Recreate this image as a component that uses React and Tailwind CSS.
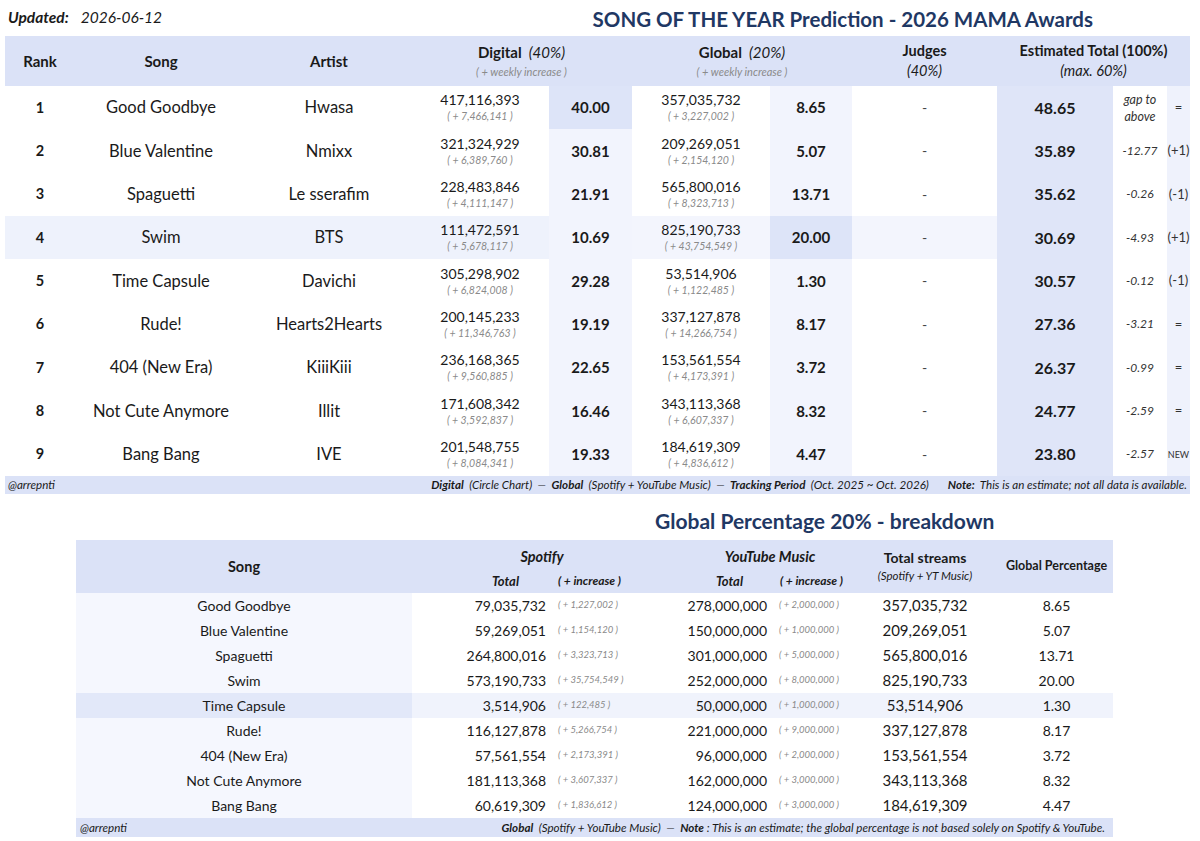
import React from "react";

const F = { fontFamily: "Lato, 'Open Sans', sans-serif" };

const top = [
  ["1", "Good Goodbye", "Hwasa", "417,116,393", "7,466,141", "40.00", "357,035,732", "3,227,002", "8.65", "48.65", "gap", "="],
  ["2", "Blue Valentine", "Nmixx", "321,324,929", "6,389,760", "30.81", "209,269,051", "2,154,120", "5.07", "35.89", "-12.77", "(+1)"],
  ["3", "Spaguetti", "Le sserafim", "228,483,846", "4,111,147", "21.91", "565,800,016", "8,323,713", "13.71", "35.62", "-0.26", "(-1)"],
  ["4", "Swim", "BTS", "111,472,591", "5,678,117", "10.69", "825,190,733", "43,754,549", "20.00", "30.69", "-4.93", "(+1)"],
  ["5", "Time Capsule", "Davichi", "305,298,902", "6,824,008", "29.28", "53,514,906", "1,122,485", "1.30", "30.57", "-0.12", "(-1)"],
  ["6", "Rude!", "Hearts2Hearts", "200,145,233", "11,346,763", "19.19", "337,127,878", "14,266,754", "8.17", "27.36", "-3.21", "="],
  ["7", "404 (New Era)", "KiiiKiii", "236,168,365", "9,560,885", "22.65", "153,561,554", "4,173,391", "3.72", "26.37", "-0.99", "="],
  ["8", "Not Cute Anymore", "Illit", "171,608,342", "3,592,837", "16.46", "343,113,368", "6,607,337", "8.32", "24.77", "-2.59", "="],
  ["9", "Bang Bang", "IVE", "201,548,755", "8,084,341", "19.33", "184,619,309", "4,836,612", "4.47", "23.80", "-2.57", "NEW"],
];

const bottom = [
  ["Good Goodbye", "79,035,732", "1,227,002", "278,000,000", "2,000,000", "357,035,732", "8.65"],
  ["Blue Valentine", "59,269,051", "1,154,120", "150,000,000", "1,000,000", "209,269,051", "5.07"],
  ["Spaguetti", "264,800,016", "3,323,713", "301,000,000", "5,000,000", "565,800,016", "13.71"],
  ["Swim", "573,190,733", "35,754,549", "252,000,000", "8,000,000", "825,190,733", "20.00"],
  ["Time Capsule", "3,514,906", "122,485", "50,000,000", "1,000,000", "53,514,906", "1.30"],
  ["Rude!", "116,127,878", "5,266,754", "221,000,000", "9,000,000", "337,127,878", "8.17"],
  ["404 (New Era)", "57,561,554", "2,173,391", "96,000,000", "2,000,000", "153,561,554", "3.72"],
  ["Not Cute Anymore", "181,113,368", "3,607,337", "162,000,000", "3,000,000", "343,113,368", "8.32"],
  ["Bang Bang", "60,619,309", "1,836,612", "124,000,000", "3,000,000", "184,619,309", "4.47"],
];

const TOP_COLS = "grid w-[1185px] grid-cols-[70px_172px_164px_138px_83px_138px_82px_145px_116px_54px_23px]";
const BOT_COLS = "grid w-[1037px] grid-cols-[336px_140px_88px_132px_78px_150px_113px]";

function Num({ n, inc }) {
  return (
    <div className="flex flex-col items-center justify-center leading-none">
      <span className="text-[14px] text-[#1a1a1a]">{n}</span>
      <span className="text-[10.5px] italic text-[#8a8a8a] mt-[4px]">( + {inc} )</span>
    </div>
  );
}

function TopRow({ r, i }) {
  const hl = i === 3;
  const base = hl ? "bg-[#eef2fc]" : "bg-white";
  const digScore = i === 0 ? "bg-[#dde4f8]" : "bg-[#f2f4fd]";
  const globNum = hl ? "bg-[#f3f5fd]" : "bg-white";
  const globScore = hl ? "bg-[#dde4f8]" : "bg-[#f2f4fd]";
  const judges = hl ? "bg-[#f3f5fd]" : "bg-white";
  return (
    <div className={`${TOP_COLS} h-[43.33px] text-[#1a1a1a]`}>
      <div className={`${base} flex items-center justify-center text-[14.5px] font-bold`}>{r[0]}</div>
      <div className={`${base} flex items-center justify-center text-[16.5px]`}>{r[1]}</div>
      <div className={`${base} flex items-center justify-center text-[16.5px]`}>{r[2]}</div>
      <div className={`${base} flex items-center justify-center`}><Num n={r[3]} inc={r[4]} /></div>
      <div className={`${digScore} flex items-center justify-center text-[15px] font-bold`}>{r[5]}</div>
      <div className={`${globNum} flex items-center justify-center`}><Num n={r[6]} inc={r[7]} /></div>
      <div className={`${globScore} flex items-center justify-center text-[15px] font-bold`}>{r[8]}</div>
      <div className={`${judges} flex items-center justify-center text-[14px] text-[#444]`}>-</div>
      <div className="bg-[#dfe5f8] flex items-center justify-center text-[16px] font-bold">{r[9]}</div>
      <div className="bg-white flex items-center justify-center italic text-[#333]">
        {r[10] === "gap" ? (
          <div className="flex flex-col items-center text-[12.5px] leading-[17px]">
            <span>gap to</span>
            <span>above</span>
          </div>
        ) : (
          <span className="text-[12px]">{r[10]}</span>
        )}
      </div>
      <div className="bg-[#eff2fc] flex items-center justify-center text-[#333]">
        {r[11] === "NEW" ? <span className="text-[9px]">NEW</span> : <span className="text-[13px]">{r[11]}</span>}
      </div>
    </div>
  );
}

function BotRow({ r, i }) {
  const hl = i === 4;
  const song = hl ? "bg-[#e2e8f9]" : "bg-[#f5f7fe]";
  const rest = hl ? "bg-[#f0f3fc]" : "bg-white";
  const inc = "text-[9.5px] italic text-[#8a8a8a]";
  return (
    <div className={`${BOT_COLS} h-[25px] text-[#1a1a1a]`}>
      <div className={`${song} flex items-center justify-center text-[14px]`}>{r[0]}</div>
      <div className={`${rest} flex items-center justify-end pr-[6px] text-[14px]`}>{r[1]}</div>
      <div className={`${rest} flex items-center pl-[6px] ${inc}`}>( + {r[2]} )</div>
      <div className={`${rest} flex items-center justify-end pr-[5px] text-[14px]`}>{r[3]}</div>
      <div className={`${rest} flex items-center pl-[7px] ${inc}`}>( + {r[4]} )</div>
      <div className={`${rest} flex items-center justify-center text-[15px]`}>{r[5]}</div>
      <div className={`${rest} flex items-center justify-center text-[14px]`}>{r[6]}</div>
    </div>
  );
}

export default function App() {
  return (
    <div className="w-[1200px] h-[841px] bg-white overflow-hidden" style={F}>
      {/* top heading line */}
      <div className="h-[36px] flex items-center justify-between pl-[8px] pr-[107px]">
        <div className="text-[15.5px] text-[#1a1a1a]">
          <span className="font-bold italic">Updated:</span>
          <span className="italic ml-[12px]">2026-06-12</span>
        </div>
        <div className="text-[20.5px] font-bold text-[#1f3864] pt-[2px]">SONG OF THE YEAR Prediction - 2026 MAMA Awards</div>
      </div>

      {/* top table */}
      <div className="pl-[5px]">
        <div className={`${TOP_COLS} h-[50px] bg-[#dbe2f7] text-[#1a1a1a]`}>
          <div className="flex items-center justify-center text-[15px] font-bold">Rank</div>
          <div className="flex items-center justify-center text-[15px] font-bold">Song</div>
          <div className="flex items-center justify-center text-[15px] font-bold">Artist</div>
          <div className="col-span-2 flex flex-col items-center justify-center leading-none">
            <div className="text-[15px]"><span className="font-bold">Digital</span><span className="italic ml-[7px]">(40%)</span></div>
            <div className="text-[11px] italic text-[#8a8a8a] mt-[6px]">( + weekly increase )</div>
          </div>
          <div className="col-span-2 flex flex-col items-center justify-center leading-none">
            <div className="text-[15px]"><span className="font-bold">Global</span><span className="italic ml-[7px]">(20%)</span></div>
            <div className="text-[11px] italic text-[#8a8a8a] mt-[6px]">( + weekly increase )</div>
          </div>
          <div className="flex flex-col items-center justify-center leading-none text-[14.5px]">
            <div className="font-bold">Judges</div>
            <div className="italic mt-[6px]">(40%)</div>
          </div>
          <div className="col-span-3 flex flex-col items-center justify-center leading-none text-[14.5px]">
            <div className="font-bold">Estimated Total (100%)</div>
            <div className="italic mt-[6px]">(max. 60%)</div>
          </div>
        </div>
        {top.map((r, i) => (
          <TopRow key={i} r={r} i={i} />
        ))}
        <div className="w-[1185px] h-[18px] bg-[#dbe2f7] flex items-center justify-between px-[3px] text-[11.6px] italic text-[#1a1a1a]">
          <span>@arrepnti</span>
          <span className="whitespace-pre">
            <span className="font-bold">Digital</span>  (Circle Chart)  —  <span className="font-bold">Global</span>  (Spotify + YouTube Music)  —  <span className="font-bold">Tracking Period</span>  (Oct. 2025 ~ Oct. 2026)       <span className="font-bold">Note:</span>  This is an estimate; not all data is available.
          </span>
        </div>
      </div>

      {/* bottom title */}
      <div className="h-[46px] flex items-end pb-[3px] pl-[655px]">
        <div className="text-[21px] font-bold text-[#1f3864]">Global Percentage 20% - breakdown</div>
      </div>

      {/* bottom table */}
      <div className="pl-[76px]">
        <div className={`${BOT_COLS} h-[53px] bg-[#dbe2f7] text-[#1a1a1a]`}>
          <div className="flex items-center justify-center text-[14.5px] font-bold">Song</div>
          <div className="col-span-2 grid grid-cols-[140px_88px] grid-rows-[30px_23px]">
            <div className="col-span-2 flex items-end justify-center pl-[32px] pb-[2px] text-[14.5px] font-bold italic">Spotify</div>
            <div className="flex items-center justify-end pr-[33px] text-[13px] font-bold italic">Total</div>
            <div className="flex items-center pl-[6px] text-[12px] font-bold italic">( + increase )</div>
          </div>
          <div className="col-span-2 grid grid-cols-[132px_78px] grid-rows-[30px_23px]">
            <div className="col-span-2 flex items-end justify-center pl-[50px] pb-[2px] text-[14.5px] font-bold italic">YouTube Music</div>
            <div className="flex items-center justify-end pr-[29px] text-[13px] font-bold italic">Total</div>
            <div className="flex items-center pl-[8px] text-[12px] font-bold italic">( + increase )</div>
          </div>
          <div className="flex flex-col items-center justify-center leading-none">
            <div className="text-[14px] font-bold">Total streams</div>
            <div className="text-[11.5px] italic mt-[5px]">(Spotify + YT Music)</div>
          </div>
          <div className="flex items-center justify-center text-[12.5px] font-bold">Global Percentage</div>
        </div>
        {bottom.map((r, i) => (
          <BotRow key={i} r={r} i={i} />
        ))}
        <div className="w-[1037px] h-[19px] bg-[#dbe2f7] flex items-center justify-between pl-[4px] pr-[8px] text-[11.6px] italic text-[#1a1a1a]">
          <span>@arrepnti</span>
          <span className="whitespace-pre">
            <span className="font-bold">Global</span>  (Spotify + YouTube Music)  —  <span className="font-bold">Note</span> : This is an estimate; the global percentage is not based solely on Spotify &amp; YouTube.
          </span>
        </div>
      </div>
    </div>
  );
}
